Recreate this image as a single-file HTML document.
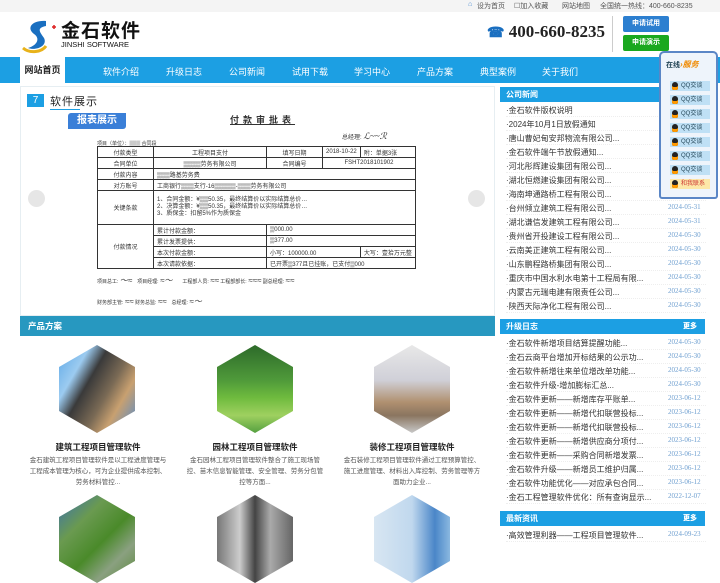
<!DOCTYPE html>
<html><head><meta charset="utf-8">
<style>
*{margin:0;padding:0;box-sizing:border-box}
body{width:720px;height:540px;overflow:hidden;background:#fff;font-family:"Liberation Sans","Noto Sans CJK SC",sans-serif;font-size:8px;color:#333;position:relative}
.abs{position:absolute}
.top{left:0;top:0;width:720px;height:12px;background:#f4f4f4;font-size:7px;color:#555}
.top span{position:absolute;top:1px}
.nav{left:0;top:57px;width:720px;height:26px;background:#1c9fe3}
.nav a{position:absolute;top:8px;color:#fff;font-size:9px;text-decoration:none}
.nav .act{left:20px;top:0;width:45px;height:26px;background:#fff;color:#222;font-weight:bold;text-align:center;line-height:26px}
.btn{left:623px;width:46px;height:16px;color:#fff;font-size:7px;text-align:center;line-height:16px;border-radius:2px;font-weight:bold}
.hd{background:#1c9fe3;color:#fff;font-weight:bold;font-size:8px;height:15px;line-height:15px;padding-left:6px}
.hd b{float:right;margin-right:8px;font-size:7px}
.list div{position:absolute;left:6px;font-size:8px;color:#333;white-space:nowrap;width:200px;border-bottom:1px dotted #eee}
.list i{position:absolute;left:162px;font-style:normal;color:#6e9fd0;font-size:7px;font-family:"Liberation Serif",serif}
.hex{position:absolute;width:76px;height:88px;clip-path:polygon(50% 0,100% 25%,100% 75%,50% 100%,0 75%,0 25%)}
.ptitle{position:absolute;width:140px;text-align:center;font-weight:bold;font-size:8.5px;color:#222}
.pdesc{position:absolute;width:140px;text-align:center;font-size:6.5px;line-height:11px;color:#555}
table{border-collapse:collapse;font-size:6px;color:#333}
td{border:1px solid #333;height:11px;padding:0 3px}
.qq{position:absolute;left:9px;width:40px;height:10px;background:#bfe0f5;font-size:6px;line-height:10px;padding-left:11px;color:#245}
.qq:before{content:"";position:absolute;left:2px;top:1px;width:6px;height:8px;border-radius:3px 3px 2px 2px;background:#222;box-shadow:inset 0 -3px 0 #f90}
</style></head><body>
<div class="abs top"><span style="left:468px;color:#4a8ad0">⌂</span><span style="left:477px">设为首页</span><span style="left:514px">☐加入收藏</span><span style="left:562px">网站地图</span><span style="left:600px">全国统一热线：400-660-8235</span></div>

<!-- logo -->
<svg class="abs" style="left:20px;top:18px" width="36" height="36" viewBox="0 0 36 36"><path d="M26 3 C12 2 6 10 14 16 C20 20 18 27 8 30 C16 33 28 28 24 20 C20 14 16 10 26 8 Z" fill="#1a6fc0"/><path d="M3 30 C10 36 22 34 26 28" stroke="#e8b21a" stroke-width="3" fill="none"/><path d="M32 9h4M34 7v4" stroke="#d22" stroke-width="1.5"/></svg>
<div class="abs" style="left:61px;top:16px;font-size:19px;font-weight:bold;color:#111;letter-spacing:1px">金石软件</div>
<div class="abs" style="left:61px;top:40px;font-size:7.5px;color:#111">JINSHI SOFTWARE</div>

<div class="abs" style="left:487px;top:22px;font-size:17px;font-weight:bold;color:#222;font-family:'Liberation Serif',serif"><span style="color:#1a6fc0;font-size:14px">☎</span> 400-660-8235</div>
<div class="abs" style="left:612px;top:16px;width:1px;height:36px;background:#ccc"></div>
<div class="abs btn" style="top:16px;background:#2c7fd0">申请试用</div>
<div class="abs btn" style="top:35px;background:#1aa81f">申请演示</div>

<div class="abs nav"><a class="act">网站首页</a><a style="left:103px">软件介绍</a><a style="left:166px">升级日志</a><a style="left:229px">公司新闻</a><a style="left:292px">试用下载</a><a style="left:354px">学习中心</a><a style="left:417px">产品方案</a><a style="left:480px">典型案例</a><a style="left:542px">关于我们</a></div>

<!-- slideshow -->
<div class="abs" style="left:20px;top:86px;width:475px;height:230px;background:#fff;border:1px solid #e6eef2"></div>
<div class="abs" style="left:27px;top:94px;width:17px;height:13px;background:#1c9fe3;color:#fff;font-size:10px;text-align:center;line-height:13px">7</div>
<div class="abs" style="left:50px;top:93px;font-size:11px;color:#222;letter-spacing:1px;border-bottom:1px solid #1c9fe3;width:30px;white-space:nowrap">软件展示</div>
<div class="abs" style="left:68px;top:113px;width:58px;height:16px;background:#3a7fd8;color:#fff;font-weight:bold;font-size:10px;text-align:center;line-height:16px;border-radius:3px 0 3px 0">报表展示</div>
<div class="abs" style="left:230px;top:113px;font-size:9px;font-weight:bold;letter-spacing:4px;text-decoration:underline">付款审批表</div>
<div class="abs" style="left:342px;top:131px;font-size:6px">总经理: <span style="font-family:'Liberation Serif';font-style:italic;font-size:9px">ℒ~~ℛ</span></div>
<div class="abs" style="left:97px;top:140px;font-size:5px">项目（单位）：▒▒▒ 合同段</div>
<table class="abs" style="left:97px;top:146px;width:319px">
<tr><td style="width:56px;text-align:center">付款类型</td><td style="width:113px;text-align:center">工程项目支付</td><td style="width:56px;text-align:center">填写日期</td><td style="text-align:center">2018-10-22</td><td>附：单据3张</td></tr>
<tr><td style="text-align:center">合同单位</td><td style="text-align:center">▒▒▒▒劳务有限公司</td><td style="text-align:center">合同编号</td><td colspan="2" style="text-align:center">FSHT2018101902</td></tr>
<tr><td style="text-align:center">付款内容</td><td colspan="4">▒▒▒路基劳务费</td></tr>
<tr><td style="text-align:center">对方账号</td><td colspan="4">工商银行▒▒▒支行-16▒▒▒▒▒-▒▒▒劳务有限公司</td></tr>
<tr><td style="text-align:center;height:34px">关键条款</td><td colspan="4" style="line-height:7px">1、合同金额：¥▒▒50.35，最终结算价以实际结算总价…<br>2、决算金额：¥▒▒50.35，最终结算价以实际结算总价…<br>3、质保金：扣留5%作为质保金</td></tr>
<tr><td rowspan="4" style="text-align:center">付款情况</td><td>累计付款金额：</td><td colspan="3">▒000.00</td></tr>
<tr><td>累计发票提供：</td><td colspan="3">▒377.00</td></tr>
<tr><td>本次付款金额：</td><td colspan="2">小写：100000.00</td><td>大写：壹拾万元整</td></tr>
<tr><td>本次请款依据：</td><td colspan="3">已开票▒377且已挂账，已支付▒000</td></tr>
</table>
<div class="abs" style="left:97px;top:275px;font-size:5px;width:330px;white-space:nowrap">项目总工: <i style="font-size:8px">〜≈</i>　项目经理: <i style="font-size:8px">≈〜</i>　　工程部人员: <i style="font-size:8px">≈≈</i> 工程部部长: <i style="font-size:8px">≈≈≈</i> 副总经理: <i style="font-size:8px">≈≈</i></div>
<div class="abs" style="left:97px;top:296px;font-size:5px;white-space:nowrap">财务部主管: <i style="font-size:8px">≈≈</i> 财务总监: <i style="font-size:8px">≈≈</i>　总经理: <i style="font-size:8px">≈〜</i></div>
<div class="abs" style="left:28px;top:190px;width:17px;height:17px;border-radius:50%;background:#e6e6e6"></div>
<div class="abs" style="left:468px;top:190px;width:17px;height:17px;border-radius:50%;background:#e6e6e6"></div>

<!-- products -->
<div class="abs" style="left:20px;top:316px;width:475px;height:20px;background:#2798c0;color:#fff;font-weight:bold;font-size:8.5px;line-height:20px;padding-left:8px">产品方案</div>
<div class="hex" style="left:59px;top:345px;background:linear-gradient(120deg,#5aa6e6 0,#9ccbf0 25%,#3a3a3a 40%,#7a6a55 60%,#c8a070 75%,#4f8ad0 100%)"></div>
<div class="hex" style="left:217px;top:345px;background:linear-gradient(180deg,#2d6a2a 0,#4f9a3a 40%,#6fbb3e 60%,#9fd060 80%,#55a040 100%)"></div>
<div class="hex" style="left:374px;top:345px;background:linear-gradient(180deg,#e8e8e8 0,#d0d0d8 40%,#b09070 65%,#8a7560 80%,#c8c8c8 100%)"></div>
<div class="ptitle" style="left:28px;top:441px">建筑工程项目管理软件</div>
<div class="ptitle" style="left:185px;top:441px">园林工程项目管理软件</div>
<div class="ptitle" style="left:342px;top:441px">装修工程项目管理软件</div>
<div class="pdesc" style="left:28px;top:455px">金石建筑工程项目管理软件是以工程进度管理与工程成本管理为核心，可为企业提供成本控制、劳务材料管控...</div>
<div class="pdesc" style="left:185px;top:455px">金石园林工程项目管理软件整合了施工现场管控、苗木信息智能管理、安全管理、劳务分包管控等方面...</div>
<div class="pdesc" style="left:342px;top:455px">金石装修工程项目管理软件通过工程预算管控、施工进度管理、材料出入库控制、劳务管理等方面助力企业...</div>
<div class="hex" style="left:59px;top:495px;background:linear-gradient(135deg,#3a70b0 0,#6a9a50 30%,#4a8a2a 55%,#8aa080 75%,#5a8a3a 100%)"></div>
<div class="hex" style="left:217px;top:495px;background:linear-gradient(90deg,#777 0,#ccc 30%,#444 50%,#aaa 70%,#666 100%)"></div>
<div class="hex" style="left:374px;top:495px;background:linear-gradient(90deg,#d8e6f2 0,#c0d8ee 50%,#4a86c8 80%,#8ab8e0 100%)"></div>

<!-- right column -->
<div class="abs" style="left:500px;top:87px;width:205px">
<div class="hd">公司新闻</div></div>
<div class="abs list" style="left:500px;top:104px;width:205px">
<div style="top:1px">·金石软件版权说明</div>
<div style="top:15px">·2024年10月1日放假通知</div>
<div style="top:29px">·唐山曹妃甸安邦物流有限公司...</div>
<div style="top:43px">·金石软件端午节放假通知...</div>
<div style="top:57px">·河北彤辉建设集团有限公司...</div>
<div style="top:71px">·湖北恒燃建设集团有限公司...</div>
<div style="top:85px">·海南坤通路桥工程有限公司...</div>
<div style="top:99px">·台州倾立建筑工程有限公司...<i>2024-05-31</i></div>
<div style="top:113px">·湖北谦信发建筑工程有限公司...<i>2024-05-31</i></div>
<div style="top:127px">·贵州省开投建设工程有限公司...<i>2024-05-30</i></div>
<div style="top:141px">·云南美正建筑工程有限公司...<i>2024-05-30</i></div>
<div style="top:155px">·山东鹏程路桥集团有限公司...<i>2024-05-30</i></div>
<div style="top:169px">·重庆市中国水利水电第十工程局有限...<i>2024-05-30</i></div>
<div style="top:183px">·内蒙古元瑞电建有限责任公司...<i>2024-05-30</i></div>
<div style="top:197px">·陕西天际净化工程有限公司...<i>2024-05-30</i></div>
</div>
<div class="abs" style="left:500px;top:319px;width:205px"><div class="hd">升级日志<b>更多</b></div></div>
<div class="abs list" style="left:500px;top:337px;width:205px">
<div style="top:1px">·金石软件新增项目结算提醒功能...<i>2024-05-30</i></div>
<div style="top:15px">·金石云商平台增加开标结果的公示功...<i>2024-05-30</i></div>
<div style="top:29px">·金石软件新增往来单位增改单功能...<i>2024-05-30</i></div>
<div style="top:43px">·金石软件升级-增加膨标汇总...<i>2024-05-30</i></div>
<div style="top:57px">·金石软件更新——新增库存平账单...<i>2023-06-12</i></div>
<div style="top:71px">·金石软件更新——新增代扣联营投标...<i>2023-06-12</i></div>
<div style="top:85px">·金石软件更新——新增代扣联营投标...<i>2023-06-12</i></div>
<div style="top:99px">·金石软件更新——新增供应商分项付...<i>2023-06-12</i></div>
<div style="top:113px">·金石软件更新——采购合同新增发票...<i>2023-06-12</i></div>
<div style="top:127px">·金石软件升级——新增员工维护归属...<i>2023-06-12</i></div>
<div style="top:141px">·金石软件功能优化——对应承包合同...<i>2023-06-12</i></div>
<div style="top:155px">·金石工程管理软件优化：所有查询显示...<i>2022-12-07</i></div>
</div>
<div class="abs" style="left:500px;top:511px;width:205px"><div class="hd">最新资讯<b>更多</b></div></div>
<div class="abs list" style="left:500px;top:529px;width:205px">
<div style="top:1px">·高效管理利器——工程项目管理软件...<i>2024-09-23</i></div>
</div>

<!-- floating QQ panel -->
<div class="abs" style="left:659px;top:51px;width:59px;height:148px;background:#eef4fb;border:2px solid #5a86c6;border-radius:5px 5px 3px 3px">
<div style="position:absolute;left:5px;top:6px;font-size:7px;color:#245;font-weight:bold">在线<span style="color:#f08a00;font-size:8px;font-style:italic">›服务</span></div>
<div class="qq" style="top:28px">QQ交谈</div>
<div class="qq" style="top:42px">QQ交谈</div>
<div class="qq" style="top:56px">QQ交谈</div>
<div class="qq" style="top:70px">QQ交谈</div>
<div class="qq" style="top:84px">QQ交谈</div>
<div class="qq" style="top:98px">QQ交谈</div>
<div class="qq" style="top:112px">QQ交谈</div>
<div class="qq" style="top:126px;background:#fde7a8;color:#c33">和我联系</div>
</div>
</body></html>
